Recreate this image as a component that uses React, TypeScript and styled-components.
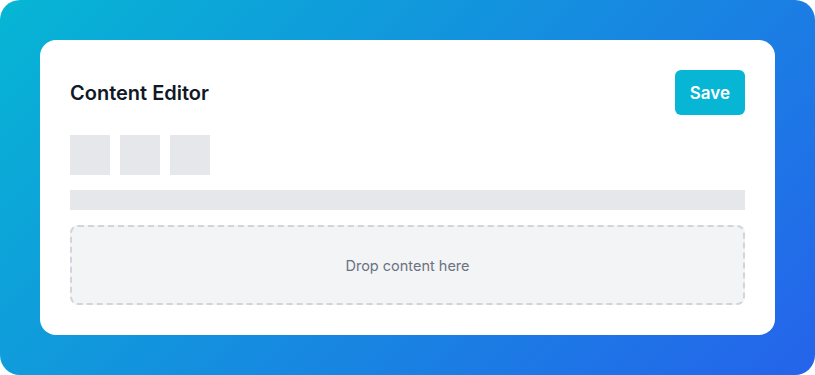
import styled, { createGlobalStyle } from 'styled-components';

const GlobalStyle = createGlobalStyle`
  html, body {
    margin: 0;
    padding: 0;
    background: #ffffff;
  }
  * { box-sizing: border-box; }
`;

const Frame = styled.div`
  width: 815px;
  height: 375px;
  padding: 40px;
  border-radius: 20px;
  background: linear-gradient(135deg, #06b6d4 0%, #2563eb 100%);
  font-family: "Inter", "Noto Sans", sans-serif;
`;

const Card = styled.div`
  height: 100%;
  background: #ffffff;
  border-radius: 16px;
  padding: 30px;
  display: flex;
  flex-direction: column;
`;

const Header = styled.div`
  display: flex;
  align-items: center;
  justify-content: space-between;
  height: 45px;
  margin-bottom: 20px;
`;

const Title = styled.h2`
  margin: 0;
  font-size: 20px;
  font-weight: 600;
  color: #111827;
`;

const SaveButton = styled.button`
  height: 45px;
  padding: 0 15px;
  border: none;
  border-radius: 6px;
  background: #06b6d4;
  color: #ffffff;
  font-family: inherit;
  font-size: 17px;
  font-weight: 600;
`;

const Toolbar = styled.div`
  display: flex;
  gap: 10px;
  margin-bottom: 15px;
`;

const ToolSlot = styled.div`
  width: 40px;
  height: 40px;
  background: #e5e7eb;
`;

const Bar = styled.div`
  height: 20px;
  background: #e5e7eb;
  margin-bottom: 15px;
`;

const DropZone = styled.div`
  height: 80px;
  border: 2px dashed #d1d5db;
  border-radius: 8px;
  background: #f3f4f6;
  display: flex;
  align-items: center;
  justify-content: center;
  color: #6b7280;
  font-size: 14.5px;
`;

export default function App() {
  return (
    <>
      <GlobalStyle />
      <Frame>
        <Card>
          <Header>
            <Title>Content Editor</Title>
            <SaveButton>Save</SaveButton>
          </Header>
          <Toolbar>
            <ToolSlot />
            <ToolSlot />
            <ToolSlot />
          </Toolbar>
          <Bar />
          <DropZone>Drop content here</DropZone>
        </Card>
      </Frame>
    </>
  );
}
